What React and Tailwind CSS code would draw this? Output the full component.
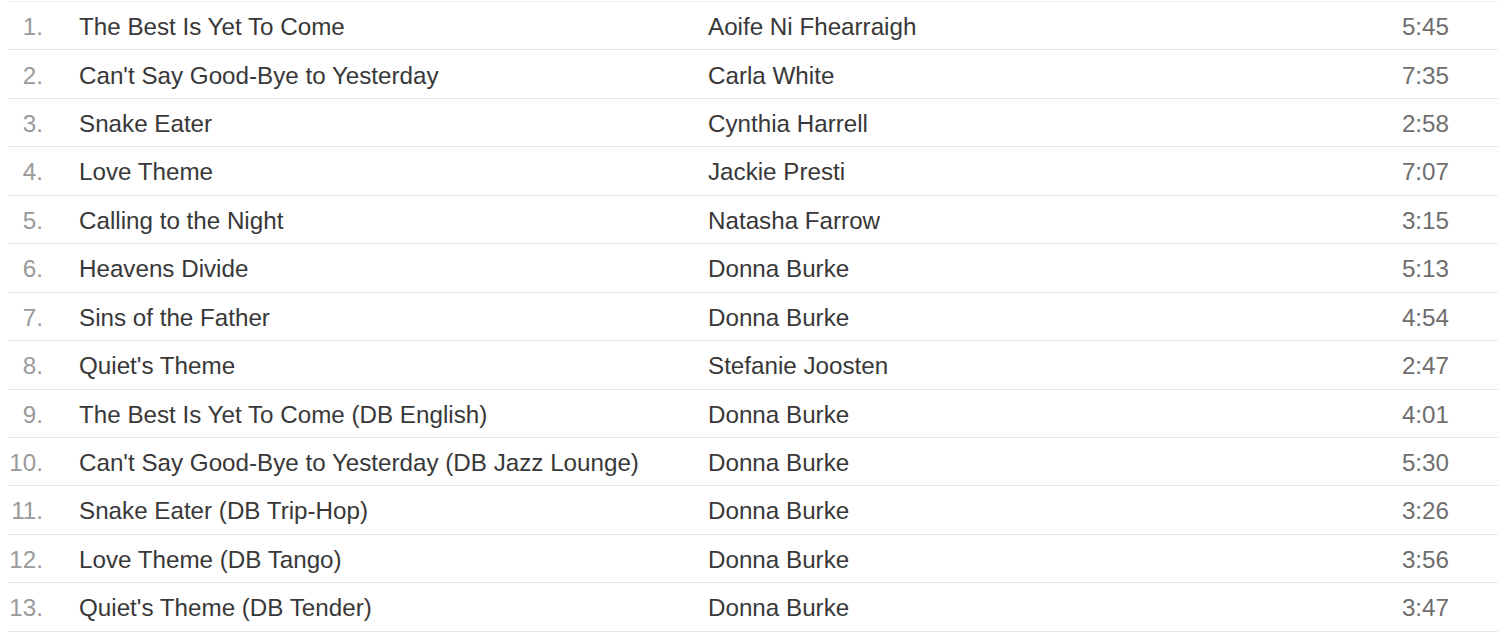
import React from "react";

const tracks = [
  ["The Best Is Yet To Come", "Aoife Ni Fhearraigh", "5:45"],
  ["Can't Say Good-Bye to Yesterday", "Carla White", "7:35"],
  ["Snake Eater", "Cynthia Harrell", "2:58"],
  ["Love Theme", "Jackie Presti", "7:07"],
  ["Calling to the Night", "Natasha Farrow", "3:15"],
  ["Heavens Divide", "Donna Burke", "5:13"],
  ["Sins of the Father", "Donna Burke", "4:54"],
  ["Quiet's Theme", "Stefanie Joosten", "2:47"],
  ["The Best Is Yet To Come (DB English)", "Donna Burke", "4:01"],
  ["Can't Say Good-Bye to Yesterday (DB Jazz Lounge)", "Donna Burke", "5:30"],
  ["Snake Eater (DB Trip-Hop)", "Donna Burke", "3:26"],
  ["Love Theme (DB Tango)", "Donna Burke", "3:56"],
  ["Quiet's Theme (DB Tender)", "Donna Burke", "3:47"],
];

export default function App() {
  return (
    <div
      className="w-[1500px] h-[632px] overflow-hidden bg-white pt-px"
      style={{ fontFamily: '"Liberation Sans", Arial, sans-serif' }}
    >
      <div className="ml-2 mr-[2px] border-t border-[#ececec]">
        {tracks.map(([title, artist, time], i) => (
          <div
            key={i}
            className="flex items-center h-[48.45px] pt-[3px] border-b border-[#e6e6e6] text-[24.2px] leading-none"
          >
            <div className="w-[35px] shrink-0 text-right text-[#9a9a9a]">{i + 1}.</div>
            <div className="ml-[36px] w-[629px] shrink-0 text-[#383838] whitespace-nowrap">{title}</div>
            <div className="flex-1 text-[#383838] whitespace-nowrap">{artist}</div>
            <div className="mr-[49px] text-right text-[#6e6e6e]">{time}</div>
          </div>
        ))}
      </div>
    </div>
  );
}
